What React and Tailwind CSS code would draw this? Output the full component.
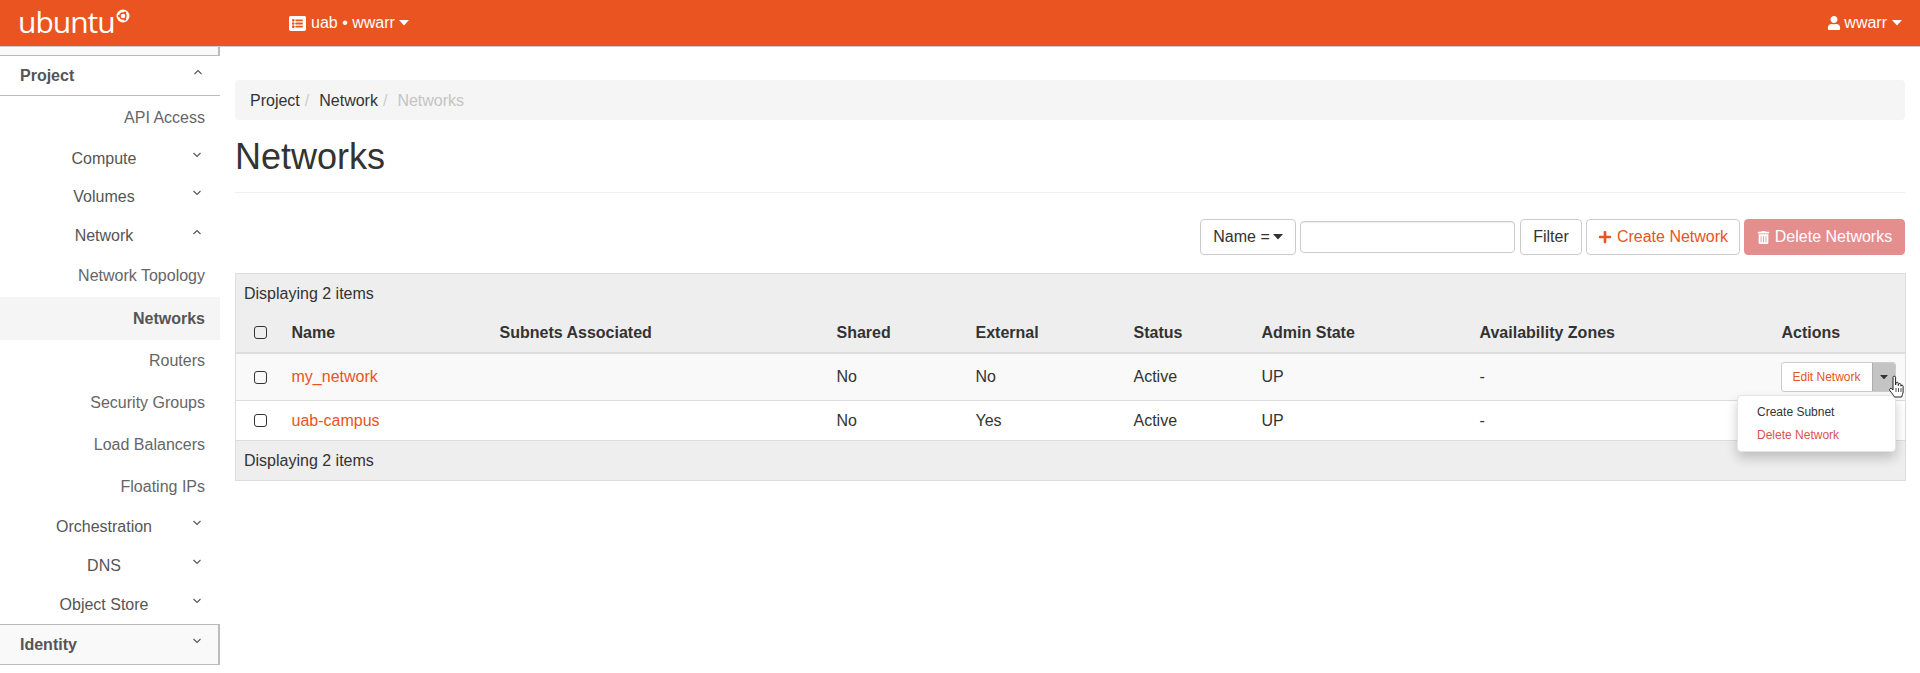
import React from "react";
import { FaListAlt, FaUser, FaPlus, FaTrashAlt } from "react-icons/fa";

const Chevron = ({ up }) => (
  <svg width="10" height="6" viewBox="0 0 10 6" className="shrink-0">
    <path d={up ? "M1.5 5 L5 1.5 L8.5 5" : "M1.5 1 L5 4.5 L8.5 1"} fill="none" stroke="#555" strokeWidth="1.1" />
  </svg>
);

const Caret = ({ className = "", w = 10 }) => (
  <svg width={w} height={w * 0.55} viewBox="0 0 10 5.5" className={className}>
    <path d="M0 0 H10 L5 5.5 Z" fill="currentColor" />
  </svg>
);

const Group = ({ label, up, h }) => (
  <div className={`flex items-center ${h}`}>
    <span className="w-[208px] text-center text-[#555]">{label}</span>
    <span className="-mt-2 ml-[-16px]"><Chevron up={up} /></span>
  </div>
);

const Leaf = ({ label, h, active }) => (
  <div className={`flex items-center justify-end pr-[15px] ${h} ${active ? "bg-[#f5f5f5] font-bold text-[#555]" : "text-[#666]"}`}>{label}</div>
);

const Check = () => <span className="block h-[13px] w-[13px] rounded-[3px] border border-[#333] bg-transparent" />;

const Btn = ({ className = "", children }) => (
  <button className={`flex h-[36px] items-center rounded-[4px] border ${className}`}>{children}</button>
);

const Row = ({ name, external, bg, h, last }) => (
  <tr className={`${bg} ${h} border-b border-[#ddd] text-[#333]`}>
    <td className={`pl-[18px] ${last ? "" : "pt-[1px]"}`}><Check /></td>
    <td className={`pl-2 text-[#e95420] ${last ? "" : "pt-[1px]"}`}>{name}</td>
    <td />
    <td className={`pl-2 ${last ? "" : "pt-[1px]"}`}>No</td>
    <td className={`pl-2 ${last ? "" : "pt-[1px]"}`}>{external}</td>
    <td className={`pl-2 ${last ? "" : "pt-[1px]"}`}>Active</td>
    <td className={`pl-2 ${last ? "" : "pt-[1px]"}`}>UP</td>
    <td className={`pl-2 ${last ? "" : "pt-[1px]"}`}>-</td>
    <td className="relative pl-[7px]">
      {last ? null : (
        <>
          <div className="flex h-[30px] w-[115px] overflow-hidden rounded-[3px] border border-[#ccc] bg-white text-xs">
            <span className="flex w-[90px] items-center justify-center text-[#e95420]">Edit Network</span>
            <span className="flex flex-1 items-center justify-center border-l border-[#adadad] bg-[#c4c4c4] text-[#333]"><Caret w={8} /></span>
          </div>
          <div className="absolute right-[9px] top-[41px] z-10 flex h-[57px] w-[159px] flex-col rounded-[4px] border border-[#e4e4e4] bg-white pl-[19px] pt-[5px] text-xs shadow-[0_6px_12px_rgba(0,0,0,0.2)]">
            <span className="flex h-[23px] items-center text-[#333]">Create Subnet</span>
            <span className="flex h-[23px] items-center text-[#d9534f]">Delete Network</span>
          </div>
          <span className="absolute right-[-1px] top-[21px] z-20 text-black">
            <svg width="18" height="24" viewBox="0 0 18 24">
              <path d="M5 2.5 a1.3 1.3 0 0 1 2.6 0 V10 l.3 -1.6 a1.2 1.2 0 0 1 2.4 .2 V10.5 l.3 -1.2 a1.2 1.2 0 0 1 2.3 .3 V11.2 a1.1 1.1 0 0 1 2.2 .2 V17 c0 2 -1.2 3 -1.5 5 H6.5 C5.5 20 3.5 18 1.8 15.4 c-.9 -1.5 .8 -2.7 2 -1.6 L5 15 Z" fill="#fff" stroke="#222" strokeWidth="1" />
              <path d="M8 17V13M10.5 17V13M13 17V13" stroke="#222" strokeWidth=".8" />
            </svg>
          </span>
        </>
      )}
    </td>
  </tr>
);

export default function App() {
  return (
    <div className="h-[673px] overflow-hidden bg-white text-base text-[#333] font-['Liberation_Sans',Arial,sans-serif]">
      <header className="flex h-[47px] items-center border-b border-[#ccc] bg-[#e95420] text-white">
        <div className="flex w-[289px] items-start pl-[18px]">
          <span className="-mt-[2px] font-['Open_Sans',sans-serif] text-[30px] font-normal leading-[32px] tracking-[-1px]">ubuntu</span>
          <svg width="14" height="14" viewBox="0 0 14 14" className="ml-[1px] mt-[1px]">
            <circle cx="7" cy="7" r="6.5" fill="#fff" />
            <circle cx="7" cy="7" r="3" fill="none" stroke="#e95420" strokeWidth="1.4" />
            <circle cx="3.2" cy="7" r="1.2" fill="#e95420" />
            <circle cx="9" cy="3.6" r="1.2" fill="#e95420" />
            <circle cx="9" cy="10.4" r="1.2" fill="#e95420" />
          </svg>
        </div>
        <div className="flex items-center">
          <FaListAlt size={17} />
          <span className="ml-[5px]">uab • wwarr</span>
          <Caret className="ml-[4px]" />
        </div>
        <div className="ml-auto flex items-center pr-[18px]">
          <FaUser size={14} />
          <span className="ml-[3px]">wwarr</span>
          <Caret className="ml-[5px]" />
        </div>
      </header>

      <div className="flex">
        <aside className="w-[220px] shrink-0">
          <div className="h-[9px] border-b border-r-2 border-[#bbb] border-t-0 bg-[#f9f9f9]" />
          <div className="flex h-[40px] items-center justify-between border-b border-[#bbb] pl-[20px] pr-[17px] font-bold text-[#555]">
            <span>Project</span>
            <span className="-mt-2"><Chevron up /></span>
          </div>
          <Leaf label="API Access" h="h-[43px]" />
          <Group label="Compute" h="h-[39px]" />
          <Group label="Volumes" h="h-[38px]" />
          <Group label="Network" up h="h-[39px]" />
          <Leaf label="Network Topology" h="h-[42px]" />
          <Leaf label="Networks" active h="h-[43px]" />
          <Leaf label="Routers" h="h-[42px]" />
          <Leaf label="Security Groups" h="h-[42px]" />
          <Leaf label="Load Balancers" h="h-[42px]" />
          <Leaf label="Floating IPs" h="h-[41px]" />
          <Group label="Orchestration" h="h-[39px]" />
          <Group label="DNS" h="h-[39px]" />
          <Group label="Object Store" h="h-[39px]" />
          <div className="flex h-[41px] items-center justify-between border-y border-r-2 border-[#bbb] bg-[#f9f9f9] pl-[20px] pr-[16px] font-bold text-[#555]">
            <span>Identity</span>
            <span className="-mt-2"><Chevron /></span>
          </div>
        </aside>

        <main className="ml-[15px] w-[1670px]">
          <nav className="mt-[33px] flex h-[40px] items-center rounded-[4px] bg-[#f5f5f5] px-[15px] pt-[1px]">
            <span className="text-[#333]">Project</span>
            <span className="ml-[5px] mr-[10px] text-[#ccc]">/</span>
            <span className="text-[#333]">Network</span>
            <span className="ml-[5px] mr-[10px] text-[#ccc]">/</span>
            <span className="text-[#c4c4c4]">Networks</span>
          </nav>

          <h1 className="mt-[17px] h-[56px] border-b border-[#eee] text-[36px] font-normal leading-[40px] text-[#333]">Networks</h1>

          <div className="mt-[26px] flex items-center justify-end">
            <Btn className="w-[96px] justify-center border-[#ccc] bg-white"><span>Name =</span><Caret className="ml-[3px]" /></Btn>
            <input className="ml-[4px] h-[32px] w-[215px] rounded-[4px] border border-[#ccc] bg-white shadow-[inset_0_1px_1px_rgba(0,0,0,0.075)]" />
            <Btn className="ml-[5px] w-[62px] justify-center border-[#ccc] bg-white">Filter</Btn>
            <Btn className="ml-[4px] w-[154px] justify-center border-[#ccc] bg-white text-[#e95420]"><FaPlus size={14} className="mr-[5px]" />Create Network</Btn>
            <Btn className="ml-[4px] w-[161px] justify-center border-[#e58e8e] bg-[#e58e8e] text-white"><FaTrashAlt size={13} className="mr-[5px]" />Delete Networks</Btn>
          </div>

          <table className="mt-[18px] w-[1670px] table-fixed border border-[#ddd]">
            <colgroup>
              <col className="w-[48px]" />
              <col className="w-[208px]" />
              <col className="w-[337px]" />
              <col className="w-[139px]" />
              <col className="w-[158px]" />
              <col className="w-[128px]" />
              <col className="w-[218px]" />
              <col className="w-[302px]" />
              <col className="w-[132px]" />
            </colgroup>
            <thead className="bg-[#eee]">
              <tr className="h-[40px]">
                <td colSpan={9} className="pl-[8px] text-[#333]">Displaying 2 items</td>
              </tr>
              <tr className="h-[39px] border-b-[2px] border-[#ddd] font-bold text-[#333]">
                <td className="pl-[18px]"><Check /></td>
                <td className="pl-2">Name</td>
                <td className="pl-2">Subnets Associated</td>
                <td className="pl-2">Shared</td>
                <td className="pl-2">External</td>
                <td className="pl-2">Status</td>
                <td className="pl-2">Admin State</td>
                <td className="pl-2">Availability Zones</td>
                <td className="pl-2">Actions</td>
              </tr>
            </thead>
            <tbody>
              <Row name="my_network" external="No" bg="bg-[#f9f9f9]" h="h-[48px]" />
              <Row name="uab-campus" external="Yes" bg="bg-white" h="h-[40px]" last />
            </tbody>
            <tfoot className="bg-[#eee]">
              <tr className="h-[40px]">
                <td colSpan={9} className="pl-[8px] text-[#333]">Displaying 2 items</td>
              </tr>
            </tfoot>
          </table>
        </main>
      </div>
    </div>
  );
}
